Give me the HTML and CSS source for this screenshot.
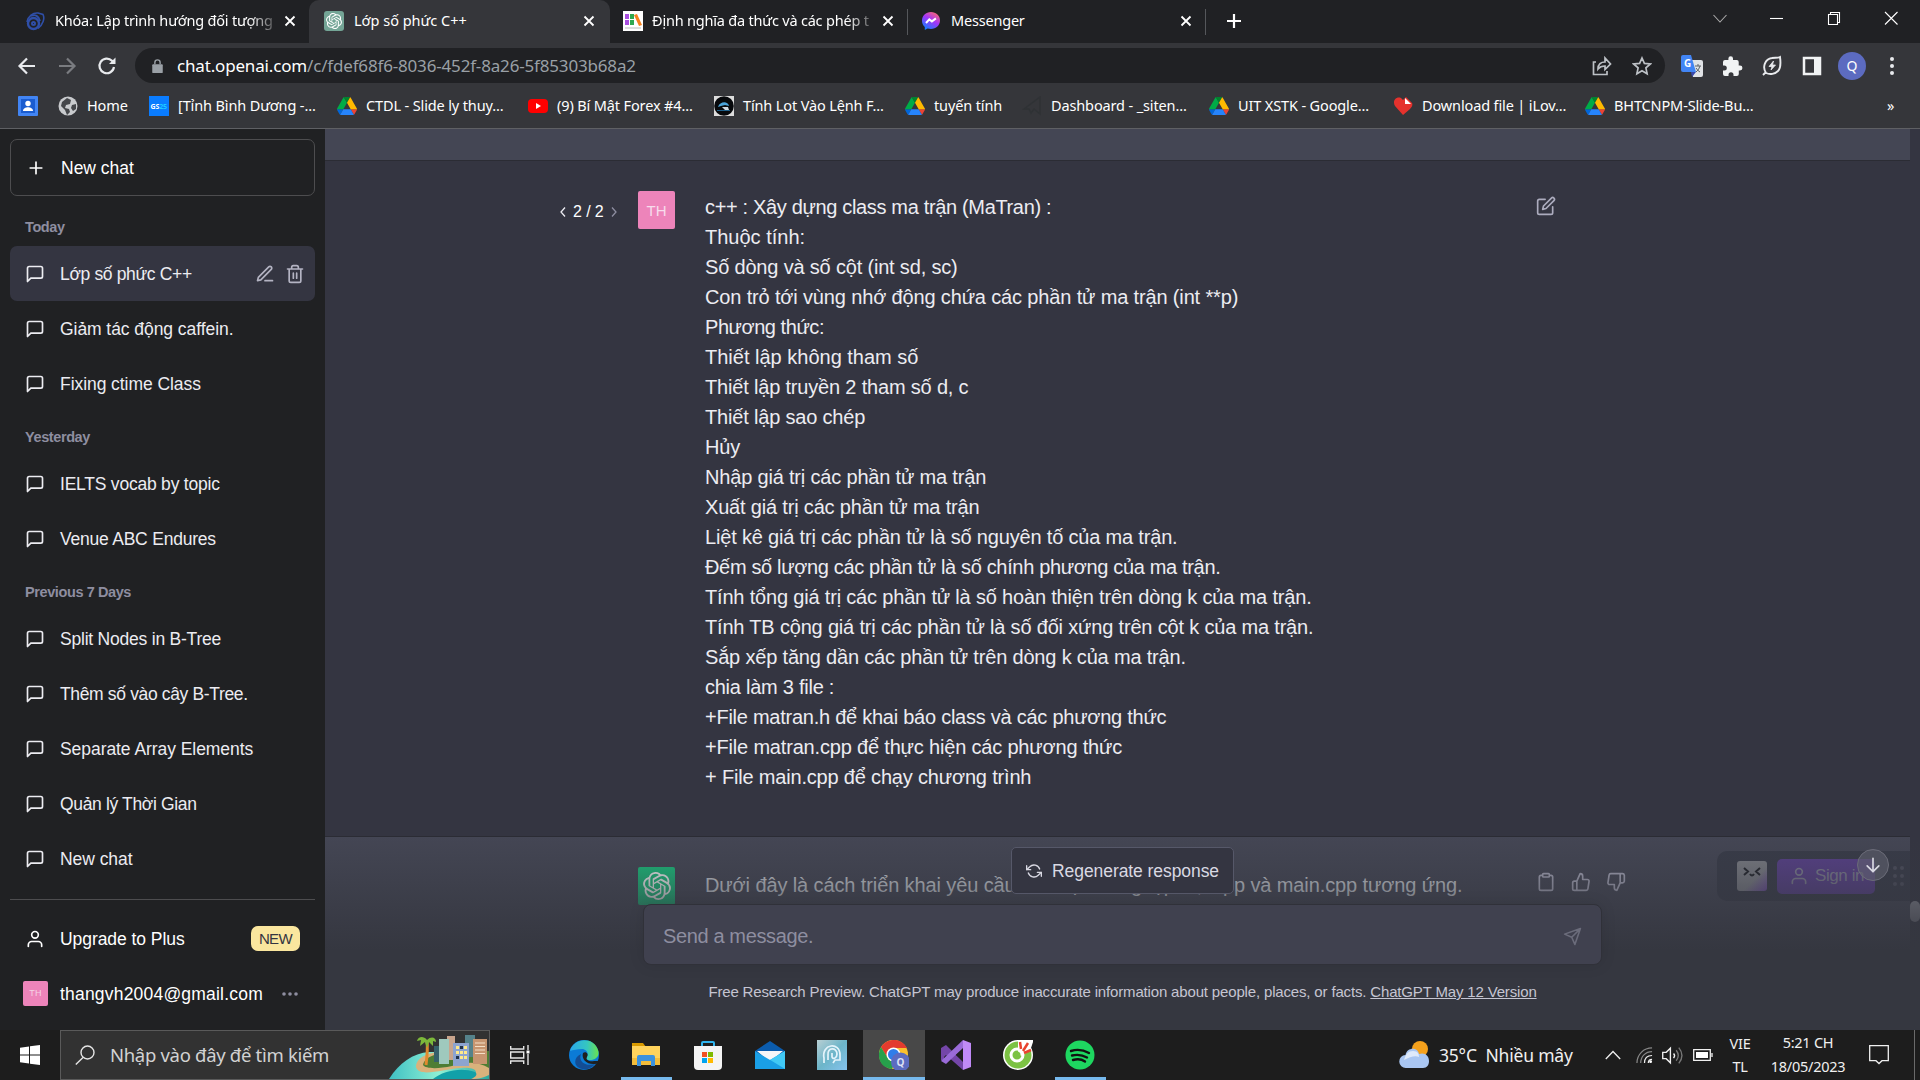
FILE: index.html
```html
<!DOCTYPE html>
<html lang="vi">
<head>
<meta charset="utf-8">
<title>Lớp số phức C++</title>
<link rel="stylesheet" href="styles.css">
</head>
<body>
<svg class="sprite" aria-hidden="true">
  <symbol id="chat" viewBox="0 0 24 24"><path d="M21 15a2 2 0 0 1-2 2H7l-4 4V5a2 2 0 0 1 2-2h14a2 2 0 0 1 2 2z"/></symbol>
  <symbol id="close" viewBox="0 0 12 12"><path d="M1.5 1.5l9 9M10.5 1.5l-9 9"/></symbol>
  <symbol id="user" viewBox="0 0 24 24"><path d="M20 21v-2a4 4 0 0 0-4-4H8a4 4 0 0 0-4 4v2"/><circle cx="12" cy="7" r="4"/></symbol>
  <symbol id="drive" viewBox="0 0 87.3 78"><path d="M6.6 66.85l3.85 6.65c.8 1.4 1.95 2.5 3.3 3.3L27.5 53H0c0 1.55.4 3.1 1.2 4.5z" fill="#0066da"/><path d="M43.65 25L29.9 1.2c-1.35.8-2.5 1.9-3.3 3.3L1.2 48.5A9 9 0 0 0 0 53h27.5z" fill="#00ac47"/><path d="M73.55 76.8c1.35-.8 2.5-1.9 3.3-3.3l1.6-2.75L86.1 57.5c.8-1.4 1.2-2.95 1.2-4.5H59.8l5.85 11.5z" fill="#ea4335"/><path d="M43.65 25L57.4 1.2C56.05.4 54.5 0 52.9 0H34.4c-1.6 0-3.15.45-4.5 1.2z" fill="#00832d"/><path d="M59.8 53H27.5L13.75 76.8c1.35.8 2.9 1.2 4.5 1.2h50.8c1.6 0 3.15-.45 4.5-1.2z" fill="#2684fc"/><path d="M73.4 26.5L60.7 4.5c-.8-1.4-1.95-2.5-3.3-3.3L43.65 25 59.8 53h27.45c0-1.55-.4-3.1-1.2-4.5z" fill="#ffba00"/></symbol>
  <symbol id="openai" viewBox="0 0 24 24"><path d="M22.2819 9.8211a5.9847 5.9847 0 0 0-.5157-4.9108 6.0462 6.0462 0 0 0-6.5098-2.9A6.0651 6.0651 0 0 0 4.9807 4.1818a5.9847 5.9847 0 0 0-3.9977 2.9 6.0462 6.0462 0 0 0 .7427 7.0966 5.98 5.98 0 0 0 .511 4.9107 6.051 6.051 0 0 0 6.5146 2.9001A5.9847 5.9847 0 0 0 13.2599 24a6.0557 6.0557 0 0 0 5.7718-4.2058 5.9894 5.9894 0 0 0 3.9977-2.9001 6.0557 6.0557 0 0 0-.7475-7.0729zm-9.022 12.6081a4.4755 4.4755 0 0 1-2.8764-1.0408l.1419-.0804 4.7783-2.7582a.7948.7948 0 0 0 .3927-.6813v-6.7369l2.02 1.1686a.071.071 0 0 1 .038.052v5.5826a4.504 4.504 0 0 1-4.4945 4.4944zm-9.6607-4.1254a4.4708 4.4708 0 0 1-.5346-3.0137l.142.0852 4.783 2.7582a.7712.7712 0 0 0 .7806 0l5.8428-3.3685v2.3324a.0804.0804 0 0 1-.0332.0615L9.74 19.9502a4.4992 4.4992 0 0 1-6.1408-1.6464zM2.3408 7.8956a4.485 4.485 0 0 1 2.3655-1.9728V11.6a.7664.7664 0 0 0 .3879.6765l5.8144 3.3543-2.0201 1.1685a.0757.0757 0 0 1-.071 0l-4.8303-2.7865A4.504 4.504 0 0 1 2.3408 7.872zm16.5963 3.8558L13.1038 8.364 15.1192 7.2a.0757.0757 0 0 1 .071 0l4.8303 2.7913a4.4944 4.4944 0 0 1-.6765 8.1042v-5.6772a.79.79 0 0 0-.407-.667zm2.0107-3.0231l-.142-.0852-4.7735-2.7818a.7759.7759 0 0 0-.7854 0L9.409 9.2297V6.8974a.0662.0662 0 0 1 .0284-.0615l4.8303-2.7866a4.4992 4.4992 0 0 1 6.6802 4.66zM8.3065 12.863l-2.02-1.1638a.0804.0804 0 0 1-.038-.0567V6.0742a4.4992 4.4992 0 0 1 7.3757-3.4537l-.142.0805L8.704 5.459a.7948.7948 0 0 0-.3927.6813zm1.0976-2.3654l2.602-1.4998 2.6069 1.4998v2.9994l-2.5974 1.4997-2.6067-1.4997Z"/></symbol>
</svg>

<header class="chrome">
  <div class="tabstrip">
    <div class="tab tab-first">
      <svg class="favicon" viewBox="0 0 20 20" fill="none" stroke="#2f4fa8"><circle cx="8.500" cy="12.500" r="5.500" stroke-width="2.400"/><path d="M2 11C3 5 8 1.500 13 2l5 1.500c2 4 0 10-5 14" stroke-width="1.600"/><circle cx="8.500" cy="12.500" r="1.500" stroke-width="2"/><path d="M6 5c4-2 8 0 9 5" stroke-width="1.800"/></svg>
      <span class="tab-title fade">Khóa: Lập trình hướng đối tượng</span>
      <svg class="tab-close"><use href="#close"/></svg>
    </div>
    <div class="tab tab-active">
      <svg class="favicon" viewBox="0 0 20 20"><rect width="20" height="20" rx="3" fill="#74a596"/><use href="#openai" x="2" y="2" width="16" height="16" fill="#fff"/></svg>
      <span class="tab-title">Lớp số phức C++</span>
      <svg class="tab-close"><use href="#close"/></svg>
    </div>
    <div class="tab tab-third">
      <svg class="favicon" viewBox="0 0 20 20"><path fill="#fff" d="M0 0h20v20H0z"/><path fill="#a94fe0" d="M2 3h4v5H2zM2 9h4v5H2z"/><path fill="#2fa84f" d="M7 3h4v5H7zM7 9h4v5H7z"/><path fill="#f5821f" d="M11 4l3-1 5 11-3 1z"/><path stroke="#bbb" d="M2 17h16"/></svg>
      <span class="tab-title fade">Định nghĩa đa thức và các phép t</span>
      <svg class="tab-close"><use href="#close"/></svg>
    </div>
    <div class="tab tab-fourth">
      <svg class="favicon" viewBox="0 0 20 20"><defs><linearGradient id="msg" x1=".8" y1="0" x2=".2" y2="1"><stop offset="0" stop-color="#ff6a70"/><stop offset=".45" stop-color="#a334fa"/><stop offset="1" stop-color="#0a84ff"/></linearGradient></defs><path fill="url(#msg)" d="M10 1C4.800 1 1 4.800 1 9.700c0 2.600 1 4.800 2.800 6.400V19l2.800-1.500c1 .3 2.200.4 3.400.4 5.200 0 9-3.800 9-8.500S15.200 1 10 1z"/><path d="M5 12l3.300-3.600 2.600 2 4-3" fill="none" stroke="#fff" stroke-width="2"/></svg>
      <span class="tab-title">Messenger</span>
      <svg class="tab-close"><use href="#close"/></svg>
    </div>
    <svg class="tab-new" viewBox="0 0 16 16"><path d="M8 1v14M1 8h14"/></svg>
    <div class="window-buttons">
      <svg viewBox="0 0 20 20"><path d="M3.500 7l6.500 7 6.500-7" stroke="#aaa"/></svg>
      <svg viewBox="0 0 20 20"><path d="M3 10.500h13"/></svg>
      <svg viewBox="0 0 20 20"><path d="M4.500 6.500h9v10h-9zM6.500 6V4.500h9v10H14"/></svg>
      <svg viewBox="0 0 20 20"><path d="M4 4l12.500 12.500M16.500 4L4 16.500"/></svg>
    </div>
  </div>

  <div class="toolbar">
    <svg class="nav-icon" viewBox="0 0 20 20"><path d="M18 10H3M10 2.500L2.500 10l7.500 7.500"/></svg>
    <svg class="nav-icon dim" viewBox="0 0 20 20"><path d="M2 10h15M10 2.500l7.500 7.500-7.500 7.500"/></svg>
    <svg class="nav-icon reload" viewBox="0 0 20 20"><path d="M17 11a7.300 7.300 0 1 1-2-6.200L17 7"/><path d="M18.500 1.500V8H12z" fill="#e8eaed" stroke="none"/></svg>
    <div class="omnibox">
      <svg class="lock" viewBox="0 0 12 16"><path fill="#9aa0a6" d="M1 6h10q1 0 1 1v8q0 1-1 1H1q-1 0-1-1V7q0-1 1-1z"/><path d="M3 6V4a3 3 0 0 1 6 0v2" fill="none" stroke="#9aa0a6" stroke-width="1.600"/></svg>
      <span class="url"><b>chat.openai.com</b>/c/fdef68f6-8036-452f-8a26-5f85303b68a2</span>
      <svg class="omni-icon" viewBox="0 0 20 20"><path d="M4 6H1.500v12.500H15V15M6 13c0-5 3-7 7-7V2l5.500 6-5.500 5.500V10c-3 0-5 .5-7 3z"/></svg>
      <svg class="omni-icon star" viewBox="0 0 20 20"><path d="M10 2l2.400 5.400 5.900.6-4.400 3.900 1.200 5.800L10 14.700l-5.100 3 1.200-5.800L1.700 8l5.900-.6z"/></svg>
    </div>
    <div class="extensions">
      <svg viewBox="0 0 22 22"><path fill="#e1e3e6" d="M10 5h10q2 0 2 2v13q0 2-2 2h-8z"/><path fill="#4285f4" d="M2 0h8l5 17H2q-2 0-2-2V2q0-2 2-2z"/><path fill="#3949ab" d="M10 17h5l-4 5z"/><text x="3" y="12" class="glyph-g">G</text><path d="M14 11h6M17 9v2M19 11q-1 4-4 6M15 13q2 3 4 4" stroke="#5f6368" fill="none"/></svg>
      <svg viewBox="0 0 22 22"><path fill="#f1f3f4" d="M19 10.500h-1.300V7a2 2 0 0 0-2-2H12V3.600a2.300 2.300 0 0 0-4.600 0V5H4a2 2 0 0 0-2 2v3.500h1.300a2.500 2.500 0 0 1 0 5H2V19a2 2 0 0 0 2 2h3.500v-1.300a2.500 2.500 0 0 1 5 0V21h3.300a2 2 0 0 0 2-2v-3.600H19a2.400 2.400 0 0 0 0-4.900z"/></svg>
      <svg viewBox="0 0 22 22" fill="none" stroke="#e8eaed" stroke-width="1.900"><path d="M5 18C1 12 4 4 11 3c3-.5 6 0 8-1 1 7 1 11-2 14-3 3-8 4-12 2zM5 17l-3 3"/><path d="M12.500 6L8 11.500h3L10 15l4.500-5h-3z" fill="#e8eaed" stroke-width=".8"/></svg>
      <svg viewBox="0 0 22 22"><path fill="none" stroke="#f1f3f4" stroke-width="2.500" d="M3 3h16v16H3z"/><path fill="#f1f3f4" d="M13 3h6v16h-6z"/></svg>
      <span class="profile">Q</span>
      <svg viewBox="0 0 22 22" fill="#e8eaed"><circle cx="11" cy="4" r="2"/><circle cx="11" cy="11" r="2"/><circle cx="11" cy="18" r="2"/></svg>
    </div>
  </div>

  <nav class="bookmarks">
    <a><svg viewBox="0 0 20 20"><rect width="20" height="20" rx="1" fill="#4285f4"/><path fill="#1a5cd0" d="M3 3h14v14H3z"/><circle cx="10" cy="7.500" r="2.700" fill="#fff"/><path fill="#fff" d="M5 15c0-5 10-5 10 0z"/></svg></a>
    <a><svg viewBox="0 0 20 20"><circle cx="10" cy="10" r="9.500" fill="#c8cacd"/><path fill="#44464a" d="M9 2l4 2-1 4-4 1-1 3 4 1 1 3-3 3-2-5-4-4 1-4zM14 9l4-1v5l-3 2-2-3z"/></svg><span>Home</span></a>
    <a><svg viewBox="0 0 20 20"><path fill="#0a7cff" d="M0 0h20v20H0z"/><text x="1.500" y="13" class="glyph-gs">GS<tspan fill="#1ccbff">25</tspan></text></svg><span>[Tỉnh Bình Dương -...</span></a>
    <a><svg><use href="#drive"/></svg><span>CTDL - Slide ly thuy...</span></a>
    <a><svg viewBox="0 0 20 20"><rect y="3" width="20" height="14" rx="4" fill="#f00"/><path fill="#fff" d="M8 7l5 3-5 3z"/></svg><span>(9) Bí Mật Forex #4...</span></a>
    <a><svg viewBox="0 0 20 20"><path fill="#ddd" d="M0 0h20v20H0z"/><circle cx="10" cy="10" r="9.800" fill="#07090c"/><path fill="#4aa3d8" d="M4 11c2-6 10-6 11-1l-4-1-4 1z"/><path fill="#cfd8df" d="M8 11h6l1 3h-4z"/><path stroke="#1d5f8a" d="M3 14.500h13"/></svg><span>Tính Lot Vào Lệnh F...</span></a>
    <a><svg><use href="#drive"/></svg><span>tuyến tính</span></a>
    <a><svg viewBox="0 0 20 20"><path fill="none" stroke="#2f3235" stroke-width="1.500" d="M2 13L18 1v17l-6-5-3 4-2-4z"/></svg><span>Dashboard - _siten...</span></a>
    <a><svg><use href="#drive"/></svg><span>UIT XSTK - Google...</span></a>
    <a><svg viewBox="0 0 20 20"><path fill="#e5322d" d="M10 19L2 10C-1 5 3 0 8 2l2 2 3-3 6 6c1 2 0 4-2 6z"/><path fill="#fff" d="M12 2l6 6h-6z"/></svg><span>Download file | iLov...</span></a>
    <a><svg><use href="#drive"/></svg><span>BHTCNPM-Slide-Bu...</span></a>
    <a class="more">»</a>
  </nav>
</header>

<div class="page">
  <aside class="sidebar">
    <button class="new-chat"><svg class="line-icon" viewBox="0 0 24 24"><path d="M12 5v14M5 12h14"/></svg><span>New chat</span></button>
    <div class="history">
      <h3>Today</h3>
      <a class="selected"><svg class="line-icon"><use href="#chat"/></svg><span class="name tight">Lớp số phức C++</span>
        <svg class="line-icon act" viewBox="0 0 24 24"><path d="M12 20h9M16.500 3.500a2.121 2.121 0 0 1 3 3L7 19l-4 1 1-4L16.500 3.500z"/></svg>
        <svg class="line-icon act" viewBox="0 0 24 24"><path d="M3 6h18M19 6v14a2 2 0 0 1-2 2H7a2 2 0 0 1-2-2V6m3 0V4a2 2 0 0 1 2-2h4a2 2 0 0 1 2 2v2M10 11v6M14 11v6"/></svg></a>
      <a><svg class="line-icon"><use href="#chat"/></svg><span>Giảm tác động caffein.</span></a>
      <a><svg class="line-icon"><use href="#chat"/></svg><span>Fixing ctime Class</span></a>
      <h3>Yesterday</h3>
      <a><svg class="line-icon"><use href="#chat"/></svg><span class="snug">IELTS vocab by topic</span></a>
      <a><svg class="line-icon"><use href="#chat"/></svg><span class="snug">Venue ABC Endures</span></a>
      <h3>Previous 7 Days</h3>
      <a><svg class="line-icon"><use href="#chat"/></svg><span class="snug">Split Nodes in B-Tree</span></a>
      <a><svg class="line-icon"><use href="#chat"/></svg><span class="tight">Thêm số vào cây B-Tree.</span></a>
      <a><svg class="line-icon"><use href="#chat"/></svg><span>Separate Array Elements</span></a>
      <a><svg class="line-icon"><use href="#chat"/></svg><span class="tight">Quản lý Thời Gian</span></a>
      <a><svg class="line-icon"><use href="#chat"/></svg><span>New chat</span></a>
    </div>
    <div class="account">
      <a><svg class="line-icon"><use href="#user"/></svg><span class="name">Upgrade to Plus</span><em class="badge">NEW</em></a>
      <a class="me"><i class="avatar-small">TH</i><span class="name">thangvh2004@gmail.com</span><svg class="dots" viewBox="0 0 16 4"><circle cx="2" cy="2" r="1.800"/><circle cx="8" cy="2" r="1.800"/><circle cx="14" cy="2" r="1.800"/></svg></a>
    </div>
  </aside>

  <main class="conversation">
    <div class="thread">
      <div class="previous"></div>
      <article class="message">
        <div class="pager"><svg viewBox="0 0 8 12"><path d="M6 1.500L2 6l4 4.500"/></svg><span>2 / 2</span><svg class="off" viewBox="0 0 8 12"><path d="M2 1.500L6 6l-4 4.500"/></svg></div>
        <div class="avatar">TH</div>
        <div class="text">
          <p>c++ : Xây dựng class ma trận (MaTran) :</p>
          <p>Thuộc tính:</p>
          <p>Số dòng và số cột (int sd, sc)</p>
          <p>Con trỏ tới vùng nhớ động chứa các phần tử ma trận (int **p)</p>
          <p>Phương thức:</p>
          <p>Thiết lập không tham số</p>
          <p>Thiết lập truyền 2 tham số d, c</p>
          <p>Thiết lập sao chép</p>
          <p>Hủy</p>
          <p>Nhập giá trị các phần tử ma trận</p>
          <p>Xuất giá trị các phần tử ma trận</p>
          <p>Liệt kê giá trị các phần tử là số nguyên tố của ma trận.</p>
          <p>Đếm số lượng các phần tử là số chính phương của ma trận.</p>
          <p>Tính tổng giá trị các phần tử là số hoàn thiện trên dòng k của ma trận.</p>
          <p>Tính TB cộng giá trị các phần tử là số đối xứng trên cột k của ma trận.</p>
          <p>Sắp xếp tăng dần các phần tử trên dòng k của ma trận.</p>
          <p>chia làm 3 file :</p>
          <p>+File matran.h để khai báo class và các phương thức</p>
          <p>+File matran.cpp để thực hiện các phương thức</p>
          <p>+ File main.cpp để chạy chương trình</p>
        </div>
        <div class="tools"><svg class="line-icon" viewBox="0 0 24 24"><path d="M11 4H4a2 2 0 0 0-2 2v14a2 2 0 0 0 2 2h14a2 2 0 0 0 2-2v-7M18.500 2.500a2.121 2.121 0 0 1 3 3L12 15l-4 1 1-4 9.500-9.500z"/></svg></div>
      </article>
      <article class="message reply">
        <div class="pager"></div>
        <div class="avatar bot"><svg><use href="#openai"/></svg></div>
        <div class="text">
          <p>Dưới đây là cách triển khai yêu cầu của bạn trong tệp .h, .cpp và main.cpp tương ứng.</p>
        </div>
        <div class="tools">
          <svg class="line-icon" viewBox="0 0 24 24"><path d="M16 4h2a2 2 0 0 1 2 2v14a2 2 0 0 1-2 2H6a2 2 0 0 1-2-2V6a2 2 0 0 1 2-2h2M9 2h6a1 1 0 0 1 1 1v2a1 1 0 0 1-1 1H9a1 1 0 0 1-1-1V3a1 1 0 0 1 1-1z"/></svg>
          <svg class="line-icon" viewBox="0 0 24 24"><path d="M14 9V5a3 3 0 0 0-3-3l-4 9v11h11.280a2 2 0 0 0 2-1.700l1.380-9a2 2 0 0 0-2-2.300zM7 22H4a2 2 0 0 1-2-2v-7a2 2 0 0 1 2-2h3"/></svg>
          <svg class="line-icon" viewBox="0 0 24 24"><path d="M10 15v4a3 3 0 0 0 3 3l4-9V2H5.720a2 2 0 0 0-2 1.700l-1.380 9a2 2 0 0 0 2 2.300zm7-13h2.670A2.310 2.310 0 0 1 22 4v7a2.310 2.310 0 0 1-2.330 2H17"/></svg>
        </div>
      </article>
    </div>

    <div class="assistant-widget">
      <svg class="face" viewBox="0 0 30 30"><defs><linearGradient id="fc" x1="0" y1="0" x2="1" y2="1"><stop offset=".6" stop-color="#7c7e85"/><stop offset="1" stop-color="#6a4a9c"/></linearGradient></defs><rect width="30" height="30" rx="3" fill="url(#fc)"/><path d="M7 7l4 3.500L7 14M23 7l-4 3.500 4 3.500M13 13q2 3 4 0" fill="none" stroke="#22242b" stroke-width="2"/></svg>
      <span class="sign-in"><svg class="line-icon"><use href="#user"/></svg><span>Sign in</span></span>
      <svg class="grip" viewBox="0 0 11 20"><circle cx="2" cy="2" r="2"/><circle cx="9" cy="2" r="2"/><circle cx="2" cy="10" r="2"/><circle cx="9" cy="10" r="2"/><circle cx="2" cy="18" r="2"/><circle cx="9" cy="18" r="2"/></svg>
    </div>
    <div class="scroll-thumb"></div>

    <div class="composer">
      <button class="regenerate"><svg class="line-icon" viewBox="0 0 24 24"><path d="M1 4v6h6M23 20v-6h-6"/><path d="M20.490 9A9 9 0 0 0 5.640 5.640L1 10m22 4l-4.640 4.360A9 9 0 0 1 3.510 15"/></svg><span>Regenerate response</span></button>
      <div class="prompt"><span>Send a message.</span><svg class="line-icon" viewBox="0 0 24 24"><path d="M22 2L11 13M22 2l-7 20-4-9-9-4 20-7z"/></svg></div>
      <p class="notice">Free Research Preview. ChatGPT may produce inaccurate information about people, places, or facts. <u>ChatGPT May 12 Version</u></p>
    </div>
    <div class="to-bottom"><svg class="line-icon" viewBox="0 0 24 24"><path d="M12 4v16M19 13l-7 7-7-7"/></svg></div>
  </main>
</div>

<footer class="taskbar">
  <div class="start"><svg viewBox="0 0 20 20"><path fill="#fff" d="M0 2.800l9-1.300v8H0zM10 1.300L20 0v9.500H10zM0 10.500h9v8l-9-1.300zM10 10.500h10V20l-10-1.300z"/></svg></div>
  <div class="search">
    <svg class="glass" viewBox="0 0 20 20"><circle cx="12.500" cy="7.500" r="6.500"/><path d="M8 12.500L.8 19.500"/></svg>
    <span>Nhập vào đây để tìm kiếm</span>
    <svg class="island" viewBox="0 0 100 48"><defs><linearGradient id="sea" x2="1"><stop offset="0" stop-color="#3fc0c4"/><stop offset=".5" stop-color="#8ff0d4"/><stop offset="1" stop-color="#2aa9a0"/></linearGradient></defs><path fill="url(#sea)" d="M0 48C10 32 24 22 40 21h60v27z"/><path fill="#d9b27c" d="M27 36c0-10 14-16 34-16h39v24c-8 4-14 4-18 4 10-8 4-12-10-11-18 1-42 10-45-1z"/><path fill="#4e7d34" d="M34 34c2-10 20-14 40-14h26v17c-14-8-25-5-37-2-14 3-26 3-29-1z"/><path fill="#12a0a8" d="M44 48c10-8 28-12 42-7 3 2 1 5-4 7z"/><path fill="#35606a" d="M45 15h6v16h-6z"/><path fill="#c9a58c" d="M58 5h8v24h-8z"/><path fill="#9fc9bd" d="M50 8h10v25H50z"/><path fill="#55828a" d="M76 4h10v22H76z"/><path fill="#8da4cf" d="M64 12h16v23H64z"/><path fill="#c79570" d="M84 8h14v25H84z"/><path fill="#ffe98a" d="M67 15h3v3h-3zM75 15h3v3h-3zM67 20h3v3h-3zM71 20h3v3h-3zM75 20h3v3h-3zM71 25h3v3h-3zM75 25h3v3h-3z"/><path fill="#22324a" d="M71 15h3v3h-3zM67 25h3v3h-3z"/><path stroke="#f4e0c8" d="M86 12h10M86 15.500h10M86 19h10M86 22.500h10"/><path stroke="#e08a2e" stroke-width="3" fill="none" d="M38 10c1 8 0 16-1 24"/><path fill="#7cb83a" d="M38 9c-4-5-9-3-10 1l4-1-1 6 5-4 2 6 2-6 4 4v-5l3 1c0-5-5-6-9-2z"/></svg>
  </div>
  <div class="apps">
    <a><svg class="taskview" viewBox="0 0 20 20"><path d="M.7 1v3h13V1M.7 19v-3h13v3M.7 7h13v6H.7zM18 0v5M18 9v11"/><path d="M16.500 5.500h3v3h-3z" fill="#fff" stroke="none"/></svg></a>
    <a><svg viewBox="0 0 30 30"><defs><linearGradient id="e1" x1="0" x2="1"><stop offset="0" stop-color="#2aa8ea"/><stop offset=".6" stop-color="#35c6c0"/><stop offset="1" stop-color="#6be34c"/></linearGradient></defs><circle cx="15" cy="15" r="15" fill="#0b7bd6"/><path fill="url(#e1)" d="M1 11C5-3 25-3 29 10c2 6-2 10-8 10-4 0-5-2-3-4 2-3-1-7-5-7-5 0-9 1-12 2z"/><path fill="#134d94" d="M12 14c-3 7 4 13 14 10-5 7-15 7-19 1-2-4 0-9 5-11z"/><path fill="#1f1f1f" d="M14 13c3-2 6 1 4 4-2 3 3 5 7 4h5c-1 2-2 3-4 3-8 1-14-5-12-11z"/></svg></a>
    <a class="running"><svg viewBox="0 0 30 30"><path fill="#d99a00" d="M1 3h11l3 4H1z"/><path fill="#ffd35c" d="M1 6h28v18H1z"/><path fill="#f4bd3a" d="M1 18h28v7H1z"/><path fill="#3c92dd" d="M6 26V17q0-2 2-2h14q2 0 2 2v9h-4v-5h-10v5z"/></svg></a>
    <a><svg viewBox="0 0 30 30"><path d="M9 8V3q0-1 1-1h10q1 0 1 1v5" fill="none" stroke="#2fb4ee" stroke-width="2"/><path fill="#f4f4f4" d="M1 6h28v20q0 4-4 4H5q-4 0-4-4z"/><path fill="#f25022" d="M9 12h5v5H9z"/><path fill="#7fba00" d="M15 12h5v5h-5z"/><path fill="#00a4ef" d="M9 18h5v5H9z"/><path fill="#ffb900" d="M15 18h5v5h-5z"/></svg></a>
    <a><svg viewBox="0 0 30 30"><path fill="#0b5cad" d="M0 11L15 1l15 10v6H0z"/><path fill="#f6f6f8" d="M2 11h26L15 22z"/><path fill="#1a9fe6" d="M0 11l15 9L30 11v18H0z"/><path fill="#41c9f5" d="M30 11v18L12 18l3 2z"/></svg></a>
    <a><svg viewBox="0 0 30 30"><defs><linearGradient id="ap" x2="1" y2="1"><stop offset="0" stop-color="#b9cfd3"/><stop offset=".5" stop-color="#6cb5c9"/><stop offset="1" stop-color="#86c3ee"/></linearGradient></defs><path fill="url(#ap)" d="M0 0h30v30H0z"/><path d="M7 23v-5c-3-14 16-17 16-3v5h-5l-2 3M11 20v-5c-1-8 9-8 9-1 0 4-4 6-5 3v-4" fill="none" stroke="#e4f4fb" stroke-width="1.700"/></svg></a>
    <a class="running focused"><svg viewBox="0 0 30 30"><circle cx="14.500" cy="14.500" r="14.500" fill="#fbc02d"/><path fill="#e33b2e" d="M2 7C8-2 22-3 28 8H14.500L8 17z"/><path fill="#27a04b" d="M2 7l8 13 6 2-3 7C1 28-3 16 2 7z"/><circle cx="14.500" cy="14.500" r="7" fill="#fff"/><circle cx="14.500" cy="14.500" r="5.500" fill="#2f7de9"/><circle cx="21.500" cy="22" r="9.500" fill="#5c6bc0"/><text x="17.500" y="26" class="glyph-q">Q</text></svg></a>
    <a><svg viewBox="0 0 30 30"><path fill="#7446a8" d="M0 8l5-3 17 17v8L5 15l-2 2v5l-3-2z"/><path fill="#9a6bd8" d="M0 21l22-21v8L5 24z"/><path fill="#c08af7" d="M22 0l8 3v24l-8 3z"/><path fill="#1f1f1f" d="M22 9v12l-7-6z"/></svg></a>
    <a><svg viewBox="0 0 30 30"><circle cx="15" cy="15" r="15" fill="#fff"/><circle cx="15" cy="15" r="13.500" fill="#7cc243"/><circle cx="14" cy="15" r="6" fill="none" stroke="#fff" stroke-width="3"/><path fill="#fff" d="M15 13V0h15v2l-3 9-9 5z"/><path stroke="#e8432e" stroke-width="2.500" d="M18 9l-1-7M20 11l5-8M21 13l7-3"/><circle cx="14" cy="15" r="3.500" fill="#7cc243"/></svg></a>
    <a class="running"><svg viewBox="0 0 30 30"><circle cx="15" cy="15" r="14.500" fill="#1ed760"/><path d="M6 11q9-3 18 2M7 15.500q8-2 15 2M8 20q7-2 12 1.500" fill="none" stroke="#111" stroke-width="2.400" stroke-linecap="round"/></svg></a>
  </div>
  <div class="tray">
    <svg class="weather" viewBox="0 0 30 28"><circle cx="21" cy="8" r="8" fill="#f5a11c"/><path fill="#a9c6f2" d="M7 27a6.500 6.500 0 0 1-.5-13C8 6 19 6 20 13c6-2 10 2 10 7 0 4-2 7-6 7z"/><path fill="#dfeafb" d="M5 19c2-6 4-9 9-9s6 3 6 6c-4-2-9 0-15 3z"/></svg>
    <span class="forecast">35°C&nbsp; Nhiều mây</span>
    <svg class="caret" viewBox="0 0 16 10"><path d="M.8 9L8 1.500 15.200 9"/></svg>
    <svg class="wifi" viewBox="0 0 18 18"><g stroke="#888"><path d="M1 17C1 8 8 1 17 1"/><path d="M5 17C5 10 10 5 17 5"/></g><path d="M9 17c0-5 3-8 8-8M13 17c0-3 1-4 4-4"/><circle cx="15.500" cy="15.500" r="1.500" fill="#fff" stroke="none"/></svg>
    <svg class="volume" viewBox="0 0 20 18"><path d="M.7 6H4l4-4v14l-4-4H.700zM11 7q2 2 0 4.500"/><path d="M13.500 4q4 5 0 10M16 1.500q6 7.500 0 15" stroke="#777"/></svg>
    <svg class="battery" viewBox="0 0 20 12"><path d="M.7.7h16.600v10.600H.7zM19 4v4"/><path d="M3 3h12v6H3z" fill="#fff" stroke="none"/></svg>
    <div class="lang"><span>VIE</span><span>TL</span></div>
    <div class="clock"><span>5:21 CH</span><span>18/05/2023</span></div>
    <svg class="bell" viewBox="0 0 20 20"><path d="M.7.7h18.600v15H13L10 18.500 7 15.700H.7z"/></svg>
    <i class="peek"></i>
  </div>
</footer>
</body>
</html>
```
FILE: styles.css
```css
* { box-sizing: border-box; }
html, body { margin: 0; height: 100%; overflow: hidden; }
body {
  display: flex; flex-direction: column;
  width: 1920px; height: 1080px;
  background: #202123; color: #fff;
  font-family: "Liberation Sans", Arial, sans-serif;
}
p, h3 { margin: 0; }
svg { display: block; flex: none; }
.sprite { display: none; }
button { font: inherit; color: inherit; background: none; cursor: pointer; }
.line-icon { width: 20px; height: 20px; fill: none; stroke: currentColor; stroke-width: 2; stroke-linecap: round; stroke-linejoin: round; }

/* browser frame */
.chrome { flex: none; height: 129px; background: #35363a; border-bottom: 1px solid #5f6064; font-family: "Noto Sans", sans-serif; }
.tabstrip { display: flex; height: 43px; background: #202124; }
.tab { display: flex; align-items: center; height: 43px; padding-bottom: 1px; font-size: 14.5px; letter-spacing: -.2px; }
.tab-first { width: 309px; padding-left: 25px; }
.tab-active { width: 301px; padding-left: 15px; background: #35363a; border-radius: 10px 10px 0 0; letter-spacing: 0; }
.tab-third, .tab-fourth { width: 298px; padding-left: 13px; border-right: 1px solid; border-image: linear-gradient(transparent 22%, #55575b 22%, #55575b 80%, transparent 80%) 1; }
.favicon { width: 20px; height: 20px; margin-right: 10px; }
.tab-title { width: 220px; line-height: 24px; margin-top: -2px; white-space: nowrap; overflow: hidden; }
.tab-third .favicon { margin-right: 9px; }
.tab-third .tab-title { width: 221px; }
.fade { -webkit-mask: linear-gradient(90deg, #000 88%, rgba(0, 0, 0, .2)); mask: linear-gradient(90deg, #000 88%, rgba(0, 0, 0, .2)); }
.tab-close { width: 12px; height: 12px; margin-left: 9px; stroke: #fff; stroke-width: 1.8; }
.tab-new { width: 16px; height: 16px; margin: 13px 0 0 20px; stroke: #fff; stroke-width: 2.2; }
.window-buttons { display: flex; gap: 37px; margin: 8px 19px 0 auto; }
.window-buttons svg { width: 20px; height: 20px; fill: none; stroke: #fff; stroke-width: 1.1; }
.toolbar { display: flex; align-items: center; height: 45px; padding: 0 17px; }
.nav-icon { width: 20px; height: 20px; margin-right: 20px; fill: none; stroke: #e8eaed; stroke-width: 2.2; }
.nav-icon.dim { stroke: #7a7c80; }
.nav-icon.reload { margin-right: 18px; }
.omnibox { display: flex; align-items: center; width: 1530px; height: 35px; padding: 0 13px 0 17px; border-radius: 18px; background: #202124; }
.lock { width: 11px; height: 14px; margin-right: 14px; }
.url { flex: 1; font-size: 17px; letter-spacing: -.17px; color: #9aa0a6; white-space: nowrap; }
.url b { font-weight: 400; color: #fff; }
.omni-icon { width: 20px; height: 20px; margin-left: 20px; fill: none; stroke: #bdc1c6; stroke-width: 1.7; }
.extensions { display: flex; align-items: center; gap: 18px; margin-left: 16px; }
.extensions svg { width: 22px; height: 22px; }
.profile { width: 28px; height: 28px; border-radius: 50%; background: #5c6bc0; font-size: 14px; line-height: 27px; text-align: center; margin: 0 -3px; }
.glyph-g { font: 700 10px "Open Sans", sans-serif; fill: #fff; }
.glyph-gs { font: 700 7px "Open Sans", sans-serif; fill: #fff; }
.glyph-q { font: 700 10px "Open Sans", sans-serif; fill: #dfe2f5; }
.bookmarks { display: grid; grid-template-columns: 40px 91px 188px 191px 186px 191px 117px 187px 184px 192px 300px 1fr; height: 36px; padding-left: 18px; font-size: 14.5px; letter-spacing: -.13px; white-space: nowrap; }
.bookmarks a { display: flex; align-items: center; gap: 9px; }
.bookmarks svg { width: 20px; height: 20px; }
.bookmarks span { padding-bottom: 2px; }
.bookmarks .more { padding: 0 0 3px 2px; }

/* chat sidebar */
.page { display: flex; flex: 1; min-height: 0; }
.sidebar { display: flex; flex-direction: column; flex: none; width: 325px; padding: 10px; background: #202123; font-size: 17.5px; letter-spacing: -.06px; white-space: nowrap; }
.sidebar span { padding-top: 2px; }
.new-chat { display: flex; align-items: center; gap: 15px; width: 305px; height: 57px; padding: 0 15px; border: 1px solid #4d4d4f; border-radius: 7px; }
.snug { letter-spacing: -.22px; }
.tight { letter-spacing: -.35px; }
.history { flex: 1; padding-top: 5px; }
.history h3 { height: 45px; padding: 1px 15px 0; font-size: 14.5px; line-height: 50px; font-weight: 700; letter-spacing: -.4px; color: #8e8ea0; }
.sidebar a { display: flex; align-items: center; gap: 15px; height: 55px; padding: 0 15px; color: #ececf1; }
.sidebar .selected { background: #343541; border-radius: 7px; padding-right: 10px; gap: 10px; }
.selected .name { padding-left: 5px; }
.sidebar .name { flex: 1; }
.act { color: #b4b4c3; }
.account { height: 121px; border-top: 1px solid #4d4d4f; padding-top: 11px; }
.account a { color: #fff; }
.badge { width: 49px; height: 25px; border-radius: 7px; background: #fae69e; color: #343541; font: 15px/26px "Liberation Sans", Arial, sans-serif; letter-spacing: -.6px; text-align: center; }
.sidebar .me { padding-left: 13px; gap: 12px; letter-spacing: .2px; }
.avatar-small { width: 25px; height: 25px; border-radius: 2px; background: #ed84ba; color: #f5d3e6; font: 9px/25px "Liberation Sans", Arial, sans-serif; text-align: center; }
.dots { width: 16px; height: 4px; margin-right: 2px; fill: #8e8ea0; }

/* conversation */
.conversation { position: relative; flex: 1; min-width: 0; overflow: hidden; background: #343541; }
.thread { width: 1585px; }
.previous { height: 32px; background: #444654; border-bottom: 1px solid #2b2c34; }
.message { display: flex; height: 676px; padding: 31px 0 0 234px; border-bottom: 1px solid #2b2c34; }
.message.reply { height: 200px; background: #444654; border: 0; }
.pager { display: flex; align-items: center; gap: 6px; width: 79px; height: 40px; font-size: 16px; letter-spacing: -.1px; }
.pager svg { width: 8px; height: 12px; fill: none; stroke: #ececf1; stroke-width: 1.3; }
.pager .off { stroke: #8e8ea0; }
.avatar { display: flex; align-items: center; justify-content: center; flex: none; width: 37px; height: 38px; margin-top: -1px; border-radius: 2px; background: #ed84ba; color: #f7dcec; font-size: 15px; }
.avatar.bot { background: #19c37d; }
.bot svg { width: 28px; height: 28px; fill: #fff; }
.text { width: 802px; margin-left: 30px; font-size: 20px; line-height: 30px; letter-spacing: -.18px; color: #ececf1; white-space: nowrap; }
.text p:nth-child(1), .text p:nth-child(13) { letter-spacing: -.34px; }
.text p:nth-child(2), .text p:nth-child(6) { letter-spacing: 0; }
.text p:nth-child(5) { letter-spacing: -.45px; }
.text p:nth-child(4) { letter-spacing: -.15px; }
.text p:nth-child(17), .text p:nth-child(18) { letter-spacing: -.25px; }
.reply .text { padding-top: 2px; color: #d1d5db; }
.reply .text p:nth-child(1) { letter-spacing: -.11px; }
.tools { display: flex; gap: 15px; margin: 4px 0 0 29px; color: #acacbe; }
.assistant-widget { position: absolute; left: 1392px; top: 722px; display: flex; align-items: center; width: 193px; height: 50px; padding-left: 20px; border-radius: 10px 0 0 10px; background: #383b48; }
.face { width: 30px; height: 30px; }
.sign-in { display: flex; align-items: center; gap: 6px; width: 98px; height: 35px; margin: 0 18px 0 10px; padding-left: 12px; border-radius: 5px; background: #58408a; color: #7f7f92; font-size: 17px; letter-spacing: -.4px; white-space: nowrap; }
.grip { width: 11px; height: 20px; fill: #4d4f5d; }
.scroll-thumb { position: absolute; right: 0; top: 772px; width: 10px; height: 21px; border-radius: 5px; background: #8b8c95; }
.composer { position: absolute; inset: 707px 0 0 0; display: flex; flex-direction: column; align-items: center; padding-top: 11px; background: linear-gradient(180deg, rgba(53, 55, 64, 0), #353740 58.85%); }
.regenerate { display: flex; align-items: center; gap: 10px; flex: none; width: 223px; height: 47px; padding: 1px 0 0 14px; border: 1px solid #565869; border-radius: 5px; background: #343541; color: #d9d9e3; font-size: 17.5px; letter-spacing: -.07px; white-space: nowrap; }
.regenerate svg { width: 16px; height: 16px; }
.regenerate span { padding-top: 1px; }
.prompt { display: flex; align-items: center; justify-content: space-between; flex: none; width: 959px; height: 61px; margin-top: 10px; padding: 3px 19px 0 19px; border: 1px solid #303139; border-radius: 8px; background: #40414f; box-shadow: 0 0 15px rgba(0, 0, 0, .1); color: #8e8ea0; font-size: 20px; letter-spacing: -.37px; }
.prompt svg { color: #6b6c7b; width: 19px; height: 19px; }
.notice { margin-top: 17px; font-size: 15px; line-height: 20px; letter-spacing: -.16px; color: #c5c5d2; white-space: nowrap; }
.to-bottom { position: absolute; left: 1532px; top: 720px; display: flex; align-items: center; justify-content: center; width: 32px; height: 32px; border: 1px solid #6b6c78; border-radius: 50%; background: rgba(95, 96, 110, .6); color: #d9d9e3; }

/* windows taskbar */
.taskbar { display: flex; flex: none; height: 50px; background: #1d1d1d; font-family: "Noto Sans", sans-serif; }
.start { display: flex; align-items: center; justify-content: center; width: 60px; }
.start svg { width: 20px; height: 20px; }
.search { display: flex; align-items: center; width: 430px; padding-left: 14px; border: 1px solid #5a5a5a; background: #323232; color: #d2d2d2; font-size: 18.5px; letter-spacing: -.31px; white-space: nowrap; }
.search span { padding-bottom: 2px; }
.glass { width: 20px; height: 20px; margin-right: 15px; fill: none; stroke: #e6e6e6; stroke-width: 1.4; }
.island { width: 100px; height: 48px; margin-left: auto; }
.apps { display: grid; grid-template-columns: 63px repeat(9, 62px); }
.apps a { display: flex; align-items: center; justify-content: center; }
.apps svg { width: 30px; height: 30px; }
.apps .taskview { width: 20px; height: 20px; fill: none; stroke: #e6e6e6; stroke-width: 1.4; margin-right: 3px; }
.running { background: linear-gradient(#76b9ed, #76b9ed) center bottom / 51px 3px no-repeat; }
.focused { background: linear-gradient(#76b9ed, #76b9ed) center bottom / 100% 3px no-repeat #484848; }
.tray { display: flex; align-items: center; margin-left: auto; white-space: nowrap; color: #f0f0f0; }
.tray svg { fill: none; stroke: #f0f0f0; stroke-width: 1.3; }
.tray .weather { width: 30px; height: 28px; stroke: none; margin-right: 10px; }
.forecast { width: 134px; margin-right: 32px; font-size: 17.5px; letter-spacing: -.2px; }
.caret { width: 16px; height: 10px; margin-right: 15px; }
.wifi { width: 17px; height: 17px; margin-right: 9px; }
.volume { width: 21px; height: 19px; margin-right: 10px; }
.battery { width: 20px; height: 12px; margin-right: 12px; }
.lang, .clock { display: flex; flex-direction: column; align-items: center; font-size: 14.5px; line-height: 23px; letter-spacing: -.25px; padding-bottom: 1px; }
.lang { width: 30px; margin-right: 11px; }
.clock { width: 84px; margin-right: 19px; line-height: 24px; padding-bottom: 2px; }
.bell { width: 20px; height: 20px; margin-right: 25px; }
.peek { width: 6px; height: 50px; border-left: 1px solid #6a6a6a; }
```
